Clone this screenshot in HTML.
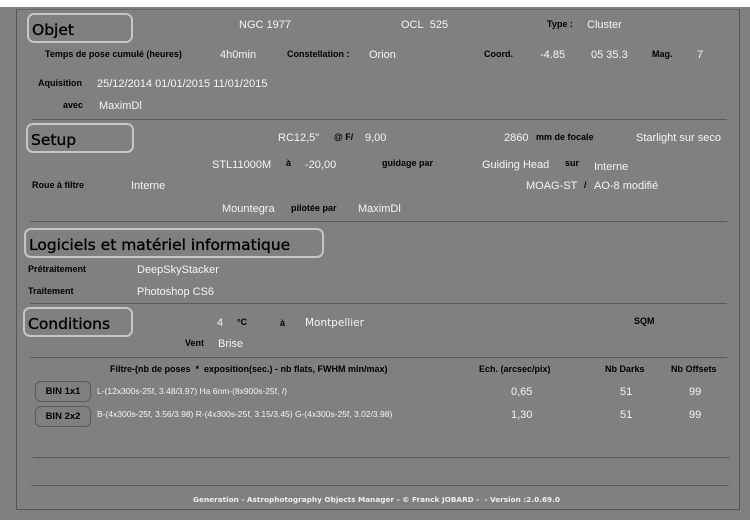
<!DOCTYPE html>
<html><head><meta charset="utf-8"><style>
*{margin:0;padding:0;box-sizing:border-box}
body{width:750px;height:520px;background:#808080;position:relative;overflow:hidden;font-family:"Liberation Sans",Arial,sans-serif}
.top{position:absolute;left:0;top:0;width:750px;height:7px;background:#fdfdfd}
.panel{position:absolute;left:16px;top:9px;width:724px;height:501px;border:1px solid #555;border-top-color:#666}
.t{position:absolute;white-space:nowrap;line-height:12px}
.v{color:#f4f4f4;font-size:11px;margin-top:2px}
.l{color:#000;font-weight:bold;font-size:9px}
.hr{position:absolute;height:1px;background:#5c5c5c}
.box{position:absolute;border:2px solid #c6c6c6;border-radius:7px;font-family:"DejaVu Sans",sans-serif;font-size:15.5px;color:#000;padding-left:3px;padding-top:2px;line-height:26px;-webkit-text-stroke:0.35px #000}
.btn{position:absolute;left:35px;width:56px;height:21px;border:1px solid #5a5a5a;border-radius:6px;font-size:9.5px;font-weight:bold;color:#000;text-align:center;line-height:19px}
.s{font-size:8.5px;color:#f4f4f4}
</style></head><body>
<div class="top"></div>
<div class="panel"></div>

<div class="box" style="left:27px;top:13px;width:106px;height:30px">Objet</div>
<div class="t v" style="left:239px;top:17px">NGC 1977</div>
<div class="t v" style="left:401px;top:17px">OCL&nbsp; 525</div>
<div class="t l" style="left:547px;top:18px">Type :</div>
<div class="t v" style="left:587px;top:17px">Cluster</div>

<div class="t l" style="left:45px;top:48px">Temps de pose cumulé (heures)</div>
<div class="t v" style="left:220px;top:47px">4h0min</div>
<div class="t l" style="left:287px;top:48px">Constellation :</div>
<div class="t v" style="left:369px;top:47px">Orion</div>
<div class="t l" style="left:484px;top:48px">Coord.</div>
<div class="t v" style="left:540px;top:47px">-4.85</div>
<div class="t v" style="left:591px;top:47px">05 35.3</div>
<div class="t l" style="left:652px;top:48px">Mag.</div>
<div class="t v" style="left:697px;top:47px">7</div>

<div class="t l" style="left:38px;top:77px">Aquisition</div>
<div class="t v" style="left:97px;top:76px">25/12/2014 01/01/2015 11/01/2015</div>
<div class="t l" style="left:63px;top:99px">avec</div>
<div class="t v" style="left:99px;top:98px">MaximDl</div>
<div class="hr" style="left:32px;top:119px;width:695px"></div>

<div class="box" style="left:26px;top:123px;width:108px;height:30px">Setup</div>
<div class="t v" style="left:278px;top:130px">RC12,5"</div>
<div class="t l" style="left:334px;top:131px">@ F/</div>
<div class="t v" style="left:365px;top:130px">9,00</div>
<div class="t v" style="left:504px;top:130px">2860</div>
<div class="t l" style="left:536px;top:131px">mm de focale</div>
<div class="t v" style="left:636px;top:130px">Starlight sur seco</div>

<div class="t v" style="left:212px;top:157px">STL11000M</div>
<div class="t l" style="left:286px;top:157px">à</div>
<div class="t v" style="left:305px;top:157px">-20,00</div>
<div class="t l" style="left:382px;top:157px">guidage par</div>
<div class="t v" style="left:482px;top:157px">Guiding Head</div>
<div class="t l" style="left:565px;top:157px">sur</div>
<div class="t v" style="left:594px;top:159px">Interne</div>

<div class="t l" style="left:32px;top:179px">Roue à filtre</div>
<div class="t v" style="left:131px;top:178px">Interne</div>
<div class="t v" style="left:526px;top:178px">MOAG-ST</div>
<div class="t l" style="left:584px;top:179px">/</div>
<div class="t v" style="left:594px;top:178px">AO-8 modifié</div>

<div class="t v" style="left:222px;top:201px">Mountegra</div>
<div class="t l" style="left:291px;top:202px">pilotée par</div>
<div class="t v" style="left:358px;top:201px">MaximDl</div>
<div class="hr" style="left:30px;top:221px;width:697px"></div>

<div class="box" style="left:24px;top:228px;width:300px;height:30px">Logiciels et matériel informatique</div>
<div class="t l" style="left:28px;top:263px">Prétraitement</div>
<div class="t v" style="left:137px;top:262px">DeepSkyStacker</div>
<div class="t l" style="left:28px;top:285px">Traitement</div>
<div class="t v" style="left:137px;top:284px">Photoshop CS6</div>
<div class="hr" style="left:30px;top:303px;width:697px"></div>

<div class="box" style="left:23px;top:307px;width:110px;height:30px">Conditions</div>
<div class="t v" style="left:217px;top:315px">4</div>
<div class="t l" style="left:237px;top:316px">°C</div>
<div class="t l" style="left:280px;top:317px">à</div>
<div class="t v" style="left:305px;top:315px;font-family:'DejaVu Sans',sans-serif;font-size:10.5px">Montpellier</div>
<div class="t l" style="left:634px;top:315px">SQM</div>
<div class="t l" style="left:185px;top:337px">Vent</div>
<div class="t v" style="left:218px;top:336px">Brise</div>
<div class="hr" style="left:30px;top:357px;width:697px"></div>

<div class="t l" style="left:110px;top:363px">Filtre-(nb de poses&nbsp; *&nbsp; exposition(sec.) - nb flats, FWHM min/max)</div>
<div class="t l" style="left:479px;top:363px">Ech. (arcsec/pix)</div>
<div class="t l" style="left:605px;top:363px">Nb Darks</div>
<div class="t l" style="left:671px;top:363px">Nb Offsets</div>

<div class="btn" style="top:381px">BIN 1x1</div>
<div class="t s" style="left:97px;top:385px">L-(12x300s-25f, 3.48/3.97) Ha 6nm-(8x900s-25f, /)</div>
<div class="t v" style="left:511px;top:384px">0,65</div>
<div class="t v" style="left:620px;top:384px">51</div>
<div class="t v" style="left:689px;top:384px">99</div>

<div class="btn" style="top:406px">BIN 2x2</div>
<div class="t s" style="left:97px;top:408px">B-(4x300s-25f, 3.56/3.98) R-(4x300s-25f, 3.15/3.45) G-(4x300s-25f, 3.02/3.98)</div>
<div class="t v" style="left:511px;top:407px">1,30</div>
<div class="t v" style="left:620px;top:407px">51</div>
<div class="t v" style="left:689px;top:407px">99</div>

<div class="hr" style="left:33px;top:457px;width:697px"></div>
<div class="hr" style="left:31px;top:485px;width:698px"></div>
<div class="t" style="left:193px;top:494px;font-family:'DejaVu Sans',sans-serif;font-weight:bold;font-size:7.3px;color:#eee">Generation - Astrophotography Objects Manager - © Franck JOBARD -&nbsp; - Version :2.0.69.0</div>
</body></html>
